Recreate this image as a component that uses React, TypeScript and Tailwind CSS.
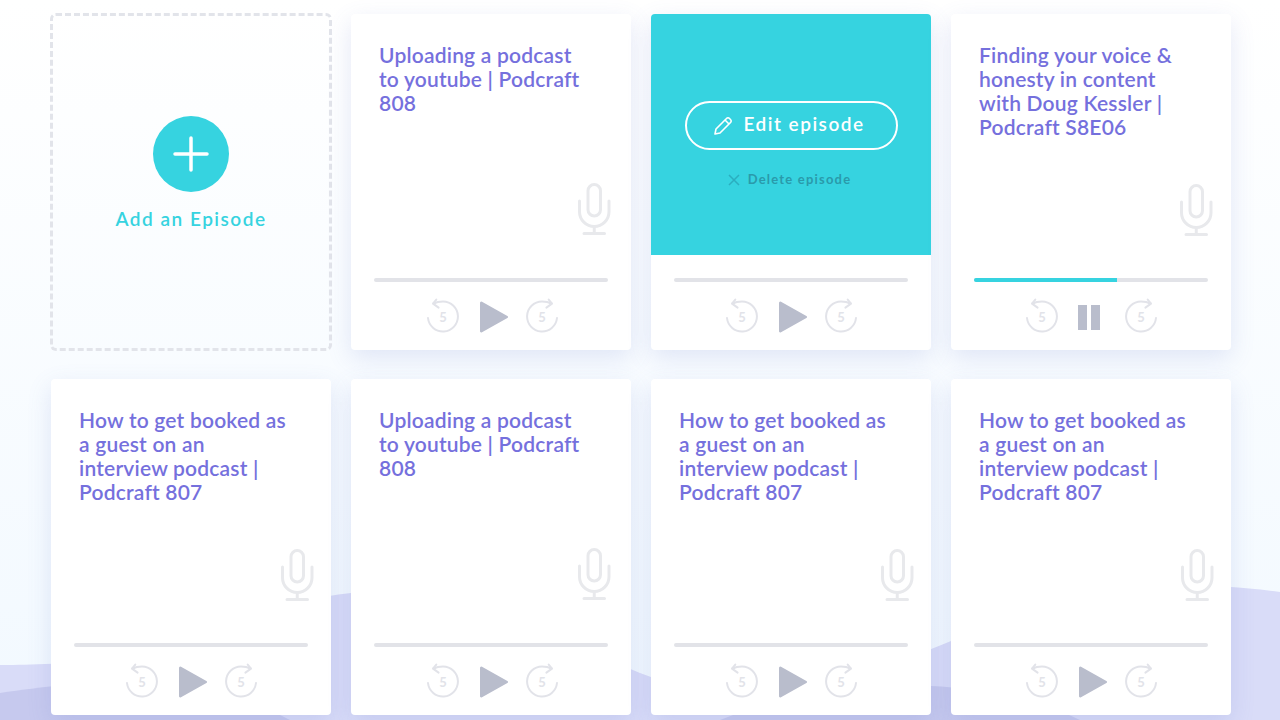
import React from 'react';

const font = { fontFamily: '"Lato", "Noto Sans", sans-serif' };

function Mic({ className }: { className: string }) {
  return (
    <svg className={`absolute ${className}`} width="33" height="52" viewBox="0 0 33 52" fill="none" stroke="#e8e9ec" strokeWidth="3" strokeLinecap="round">
      <rect x="10" y="1.500" width="12.500" height="31.500" rx="6.250" />
      <path d="M1.500 18v10.750a14.750 14.750 0 0 0 29.500 0V18" />
      <path d="M16.250 44v6.500M6 50.500h20.500" />
    </svg>
  );
}

function Skip({ forward }: { forward?: boolean }) {
  return (
    <svg width="32" height="36" viewBox="0 0 32 36" fill="none" stroke="#e2e3e9" strokeWidth="2" strokeLinecap="round" strokeLinejoin="round">
      <g transform={forward ? 'matrix(-1 0 0 1 32 0)' : undefined}>
        <path d="M1 20a15 15 0 1 0 15-16.500Q10.500 3.500 6.500 5.500" />
        <path d="M9.300 1.600L6 5.600l5.600 4" />
      </g>
      <text x="16" y="24" textAnchor="middle" fontSize="13" fontWeight="700" fill="#e2e3e9" stroke="none" style={font}>5</text>
    </svg>
  );
}

function Play() {
  return (
    <svg className="ml-[21px] mr-[18px] mt-[1px]" width="28" height="32" viewBox="0 0 28 32">
      <path d="M2 .800 L27.400 15a1.100 1.100 0 0 1 0 2L2 31.200a1.300 1.300 0 0 1-2-1V1.800a1.300 1.300 0 0 1 2-1z" fill="#b9bdcc" />
    </svg>
  );
}

function Pause() {
  return (
    <div className="ml-[20px] mr-[25px] mt-[2px] flex gap-[4px] h-[25px] w-[22px]">
      <div className="w-[9px] bg-[#b9bdcc]" />
      <div className="w-[9px] bg-[#b9bdcc]" />
    </div>
  );
}

type CardProps = {
  title?: string;
  micClass?: string;
  controlsClass?: string;
  progress?: number;
  playing?: boolean;
  active?: boolean;
};

function EpisodeCard({ title, micClass, controlsClass = 'pl-[75px]', progress, playing, active }: CardProps) {
  return (
    <div className="relative h-[336px] bg-white rounded-[4px] shadow-[0_8px_24px_rgba(95,110,200,0.16)] overflow-hidden">
      {/* the hover panel covers the title and mic, so they are left out */}
      {active ? (
        <div className="h-[264px]">
          <div className="h-[241px] bg-[#36d3e0] flex flex-col items-center pt-[87px]">
            <button className="w-[213px] h-[49px] rounded-full border-2 border-white text-white flex items-center justify-center gap-[11px] pr-[3px] pb-[2px] text-[19px] font-semibold tracking-[1.5px]">
              <svg className="mt-[2px]" width="18" height="18" viewBox="0 0 18 18" fill="none" stroke="white" strokeWidth="1.600" strokeLinejoin="round">
                <path d="M1 17l1-5L12.500 1.500a2 2 0 0 1 3 0l1 1a2 2 0 0 1 0 3L6 16z" />
                <path d="M11 3l4 4" />
              </svg>
              Edit episode
            </button>
            <div className="mt-[20px] pr-[3px] flex items-center gap-[8px] text-[13px] font-bold tracking-[1.2px] text-[#2a9aab]">
              <svg width="12" height="12" viewBox="0 0 12 12" stroke="#2baebf" strokeWidth="1.500">
                <path d="M1 1l10 10M11 1L1 11" />
              </svg>
              Delete episode
            </div>
          </div>
        </div>
      ) : (
        <div className="h-[264px] pt-[29px] px-[28px]">
          <h3 className="text-[21px] leading-[24px] font-semibold tracking-[0.2px] text-[#7570dd] w-[212px]">{title}</h3>
          <Mic className={micClass ?? ''} />
        </div>
      )}
      <div className="mx-[23px] h-[4px] rounded-full bg-[#e2e3e8] overflow-hidden">
        {progress ? <div className="h-full bg-[#36d3e0]" style={{ width: `${progress}%` }} /> : null}
      </div>
      <div className={`mt-[16px] flex items-center h-[36px] ${controlsClass}`}>
        <Skip />
        {playing ? <Pause /> : <Play />}
        <Skip forward />
      </div>
    </div>
  );
}

export default function App() {
  return (
    <div className="relative w-[1280px] h-[720px] overflow-hidden bg-gradient-to-b from-white to-[#f2f9ff]" style={font}>
      <svg className="absolute inset-0" width="1280" height="720" viewBox="0 0 1280 720">
        <path d="M0 665C20 665 60 664 120 660C200 650 270 600 351 593C450 590 560 640 640 673L651 677C720 710 860 680 951 641C1060 590 1150 575 1280 592V720H0z" fill="#d9dcf8" />
        <path d="M0 693C40 687 100 680 160 680C210 680 260 705 290 720H0z" fill="#c6c9ee" />
        <path d="M720 720C780 695 860 685 931 686C980 688 1040 700 1080 720z" fill="#c6c9ee" />
      </svg>
      <div className="relative ml-[51px] pt-[14px] w-[1180px] grid grid-cols-4 gap-x-[20px] gap-y-[29px]">
        <div className="h-[338px] -mx-px -my-px rounded-[6px] border-[3px] border-dashed border-[#e2e4ea] flex flex-col items-center pt-[100px]">
          <div className="w-[76px] h-[76px] rounded-full bg-[#36d3e0] flex items-center justify-center">
            <svg width="36" height="36" viewBox="0 0 36 36" stroke="white" strokeWidth="3.500" strokeLinecap="round">
              <path d="M18 2v32M2 18h32" />
            </svg>
          </div>
          <div className="mt-[15px] text-[19px] leading-[24px] font-semibold tracking-[1.5px] text-[#36d3e0]">Add an Episode</div>
        </div>
        <EpisodeCard title="Uploading a podcast to youtube | Podcraft 808" micClass="right-[20px] top-[169px]" controlsClass="pl-[76px]" />
        <EpisodeCard active />
        <EpisodeCard title="Finding your voice & honesty in content with Doug Kessler | Podcraft S8E06" micClass="right-[18px] top-[170px]" progress={61} playing />
        <EpisodeCard title="How to get booked as a guest on an interview podcast | Podcraft 807" micClass="right-[17px] top-[170px]" />
        <EpisodeCard title="Uploading a podcast to youtube | Podcraft 808" micClass="right-[20px] top-[169px]" controlsClass="pl-[76px]" />
        <EpisodeCard title="How to get booked as a guest on an interview podcast | Podcraft 807" micClass="right-[17px] top-[170px]" />
        <EpisodeCard title="How to get booked as a guest on an interview podcast | Podcraft 807" micClass="right-[17px] top-[170px]" />
      </div>
    </div>
  );
}
